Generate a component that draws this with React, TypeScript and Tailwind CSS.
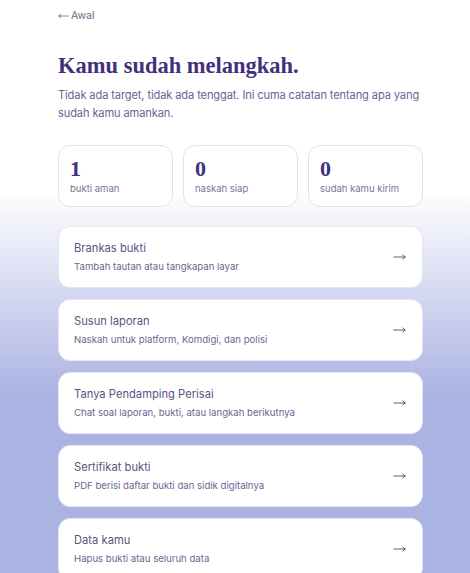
const STATS = [
  { value: '1', label: 'bukti aman' },
  { value: '0', label: 'naskah siap' },
  { value: '0', label: 'sudah kamu kirim' },
]

const ACTIONS = [
  { title: 'Brankas bukti', desc: 'Tambah tautan atau tangkapan layar' },
  { title: 'Susun laporan', desc: 'Naskah untuk platform, Komdigi, dan polisi' },
  { title: 'Tanya Pendamping Perisai', desc: 'Chat soal laporan, bukti, atau langkah berikutnya' },
  { title: 'Sertifikat bukti', desc: 'PDF berisi daftar bukti dan sidik digitalnya' },
  { title: 'Data kamu', desc: 'Hapus bukti atau seluruh data' },
]

function LongArrow({ left = false, className = '' }: { left?: boolean; className?: string }) {
  return (
    <svg
      width="13"
      height="8"
      viewBox="0 0 13 8"
      fill="none"
      stroke="currentColor"
      strokeWidth="1"
      strokeLinecap="round"
      strokeLinejoin="round"
      className={className}
      style={left ? { transform: 'scaleX(-1)' } : undefined}
    >
      <path d="M0.8 4H12.2M9.8 2L12.2 4L9.8 6" />
    </svg>
  )
}

export default function App() {
  return (
    <div className="min-h-screen bg-[linear-gradient(180deg,#ffffff_190px,#abb3e3_395px)] font-['Inter','Noto_Sans',sans-serif]">
      <div className="pl-[58px] pr-[47px] pt-[9px] pb-10">
        {/* Back link */}
        <a href="#" className="flex items-center gap-[2px] text-[10.5px] leading-[13px] text-[#6f6a86]">
          <LongArrow left className="w-[11px]" />
          Awal
        </a>

        {/* Heading */}
        <h1 className="mt-[30px] font-['Liberation_Serif',serif] text-[22.5px] font-bold leading-[28px] text-[#43307d]">
          Kamu sudah melangkah.
        </h1>
        <p className="mt-[6px] text-[11.1px] leading-[18px] tracking-[-0.12px] text-[#6c6296]">
          Tidak ada target, tidak ada tenggat. Ini cuma catatan tentang apa yang sudah kamu amankan.
        </p>

        {/* Stats */}
        <div className="mt-[23px] grid grid-cols-3 gap-[10px]">
          {STATS.map((s) => (
            <div
              key={s.label}
              className="h-[62px] rounded-[12px] border border-[#e3e0ef] bg-white px-[11px] pt-[11px]"
            >
              <div className="font-['Liberation_Serif',serif] text-[22px] font-bold leading-[24px] text-[#43307d]">
                {s.value}
              </div>
              <div className="mt-[2px] text-[9.5px] leading-[12px] text-[#7a7396]">{s.label}</div>
            </div>
          ))}
        </div>

        {/* Actions */}
        <div className="mt-[19px] flex flex-col gap-[11px]">
          {ACTIONS.map((a) => (
            <a
              key={a.title}
              href="#"
              className="flex h-[62px] items-center justify-between rounded-[12px] border border-[#e6e4f2] bg-white pl-[15px] pr-[16px]"
            >
              <div>
                <div className="text-[11.2px] leading-[15px] text-[#5b5382]">{a.title}</div>
                <div className="mt-[4px] text-[9.6px] leading-[13px] text-[#6c6590]">{a.desc}</div>
              </div>
              <LongArrow className="text-[#5f5a78]" />
            </a>
          ))}
        </div>
      </div>
    </div>
  )
}
